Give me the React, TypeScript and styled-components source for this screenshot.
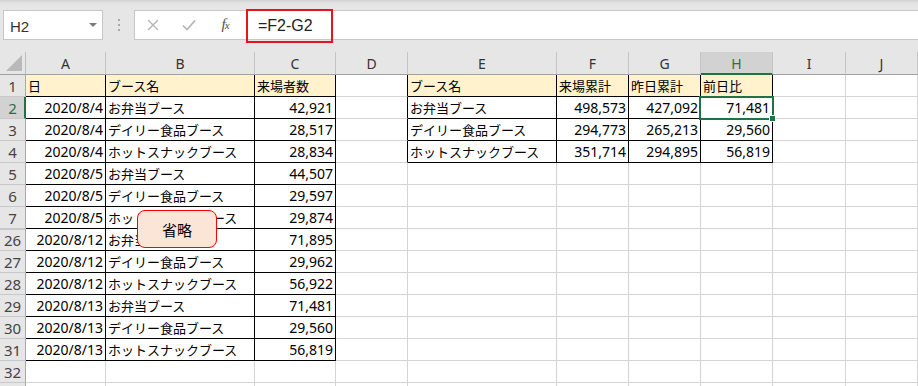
import React from "react";
import styled, { createGlobalStyle } from "styled-components";

const GlobalStyle = createGlobalStyle`
  html, body { margin: 0; padding: 0; background: #ffffff; }
  body { font-family: "Noto Sans CJK JP", "Noto Sans", sans-serif; overflow: hidden; }
`;

const COLS = [26, 80, 149, 81, 72, 149, 72, 72, 72, 73, 72];
const LETTERS = ["A", "B", "C", "D", "E", "F", "G", "H", "I", "J"];

const GRID = "#d4d4d4";
const BLACK = "#000000";
const GREEN = "#217346";

const Page = styled.div`
  position: relative;
  width: 918px;
  height: 386px;
  overflow: hidden;
  background: #ffffff;
`;

const Toolbar = styled.div`
  height: 52px;
  box-sizing: border-box;
  padding-top: 10px;
  display: flex;
  align-items: flex-start;
  background: linear-gradient(#d2d2d2 0px, #e2e2e2 3px, #e6e6e6 6px);
`;

const NameBox = styled.div`
  margin-left: 3px;
  width: 100px;
  height: 30px;
  box-sizing: border-box;
  background: #ffffff;
  border: 1px solid #c6c6c6;
  display: flex;
  align-items: center;
  justify-content: space-between;
  padding: 2px 5px 0 6px;
  font-family: "Liberation Sans", Arial, sans-serif;
  font-size: 15px;
  color: #333333;
`;

const Caret = styled.span`
  width: 0;
  height: 0;
  border-left: 4px solid transparent;
  border-right: 4px solid transparent;
  border-top: 4px solid #7a7a7a;
  margin-top: -3px;
`;

const Grip = styled.div`
  width: 31px;
  height: 30px;
  display: flex;
  flex-direction: column;
  align-items: center;
  justify-content: center;
  gap: 3px;
`;

const GripDot = styled.span`
  width: 2px;
  height: 2px;
  background: #a8a8a8;
`;

const ButtonBox = styled.div`
  width: 109px;
  height: 30px;
  box-sizing: border-box;
  background: #ffffff;
  border: 1px solid #c6c6c6;
  border-right: none;
  display: flex;
  align-items: center;
`;

const IconSlot = styled.span<{ $dark?: boolean }>`
  width: 37px;
  height: 28px;
  display: flex;
  align-items: center;
  justify-content: center;
  color: ${(p) => (p.$dark ? "#555555" : "#b4b4b4")};
`;

const FxText = styled.span`
  font-family: "Liberation Serif", "Times New Roman", serif;
  font-style: italic;
  font-size: 15px;
  color: #505050;
  letter-spacing: -1px;
  margin-top: -2px;
`;

const FxSub = styled.span`
  font-size: 11px;
`;

const FormulaArea = styled.div`
  flex: 1;
  height: 30px;
  box-sizing: border-box;
  background: #ffffff;
  border-top: 1px solid #c6c6c6;
  border-bottom: 1px solid #c6c6c6;
  display: flex;
  align-items: flex-start;
`;

const FormulaBox = styled.div`
  margin: -2px 0 0 3px;
  width: 87px;
  height: 34px;
  box-sizing: border-box;
  border: 2px solid #e8141a;
  display: flex;
  align-items: center;
  padding: 0 0 0 10px;
  font-family: "Liberation Sans", Arial, sans-serif;
  font-size: 16px;
  color: #222222;
`;

const Sheet = styled.div`
  display: grid;
  grid-template-columns: ${COLS.map((c) => `${c}px`).join(" ")};
  grid-template-rows: 23px;
  grid-auto-rows: 22px;
`;

const Corner = styled.div`
  position: relative;
  box-sizing: border-box;
  background: #e6e6e6;
  border-right: 1px solid #bdbdbd;
  border-bottom: 1px solid #a0a0a0;
`;

const CornerMark = styled.svg`
  position: absolute;
  right: 3px;
  bottom: 3px;
`;

const ColHead = styled.div<{ $sel?: boolean }>`
  box-sizing: border-box;
  background: ${(p) => (p.$sel ? "#d2d2d2" : "#e6e6e6")};
  border-right: 1px solid #c4c4c4;
  border-bottom: ${(p) => (p.$sel ? `2px solid ${GREEN}` : "1px solid #a0a0a0")};
  display: flex;
  align-items: center;
  justify-content: center;
  padding-top: 1px;
  font-family: "Noto Sans", sans-serif;
  font-size: 14px;
  color: ${(p) => (p.$sel ? GREEN : "#333333")};
`;

const RowHead = styled.div<{ $sel?: boolean; $gap?: boolean }>`
  box-sizing: border-box;
  background: ${(p) => (p.$sel ? "#d2d2d2" : "#e6e6e6")};
  border-right: ${(p) => (p.$sel ? `2px solid ${GREEN}` : "1px solid #a8a8a8")};
  border-bottom: 1px solid #c8c8c8;
  box-shadow: ${(p) => (p.$gap ? "inset 0 1px 0 #c8c8c8" : "none")};
  display: flex;
  align-items: flex-end;
  justify-content: center;
  padding-bottom: 1px;
  padding-left: ${(p) => (p.$sel ? "1px" : "0")};
  font-family: "Noto Sans", sans-serif;
  font-size: 15px;
  line-height: 18px;
  color: ${(p) => (p.$sel ? GREEN : "#444444")};
`;

const Cell = styled.div<{ $r: string; $b: string; $bg?: string; $right?: boolean; $jp?: boolean }>`
  position: relative;
  box-sizing: border-box;
  border-right: 1px solid ${(p) => p.$r};
  border-bottom: 1px solid ${(p) => p.$b};
  background: ${(p) => p.$bg ?? "#ffffff"};
  display: flex;
  align-items: flex-end;
  justify-content: ${(p) => (p.$right ? "flex-end" : "flex-start")};
  padding: 0 2px 1px 2px;
  font-family: ${(p) => (p.$jp ? `"Noto Sans CJK JP", sans-serif` : `"Noto Sans", "Noto Sans CJK JP", sans-serif`)};
  font-size: ${(p) => (p.$jp ? "13px" : "14px")};
  line-height: 18px;
  color: #000000;
  white-space: nowrap;
`;

const Selection = styled.div`
  position: absolute;
  top: -1px;
  left: -2px;
  right: -2px;
  bottom: -2px;
  border: 2px solid ${GREEN};
  z-index: 2;
  pointer-events: none;
`;

const FillHandle = styled.div`
  position: absolute;
  right: -4px;
  bottom: -4px;
  width: 5px;
  height: 5px;
  background: ${GREEN};
  border: 1px solid #ffffff;
`;

const Callout = styled.div`
  position: absolute;
  left: 137px;
  top: 210px;
  width: 80px;
  height: 38px;
  box-sizing: border-box;
  background: #fbe5d6;
  border: 1px solid #ff0000;
  border-radius: 8px;
  display: flex;
  align-items: center;
  justify-content: center;
  font-size: 15px;
  color: #000000;
  z-index: 3;
`;

type RowData = { n: number; label: string; cells: string[] };

const E = ["", "", "", "", "", "", ""];

const ROWS: RowData[] = [
  { n: 1, label: "1", cells: ["日", "ブース名", "来場者数", "", "ブース名", "来場累計", "昨日累計", "前日比", "", ""] },
  { n: 2, label: "2", cells: ["2020/8/4", "お弁当ブース", "42,921", "", "お弁当ブース", "498,573", "427,092", "71,481", "", ""] },
  { n: 3, label: "3", cells: ["2020/8/4", "デイリー食品ブース", "28,517", "", "デイリー食品ブース", "294,773", "265,213", "29,560", "", ""] },
  { n: 4, label: "4", cells: ["2020/8/4", "ホットスナックブース", "28,834", "", "ホットスナックブース", "351,714", "294,895", "56,819", "", ""] },
  { n: 5, label: "5", cells: ["2020/8/5", "お弁当ブース", "44,507", ...E] },
  { n: 6, label: "6", cells: ["2020/8/5", "デイリー食品ブース", "29,597", ...E] },
  { n: 7, label: "7", cells: ["2020/8/5", "ホットスナックブース", "29,874", ...E] },
  { n: 26, label: "26", cells: ["2020/8/12", "お弁当ブース", "71,895", ...E] },
  { n: 27, label: "27", cells: ["2020/8/12", "デイリー食品ブース", "29,962", ...E] },
  { n: 28, label: "28", cells: ["2020/8/12", "ホットスナックブース", "56,922", ...E] },
  { n: 29, label: "29", cells: ["2020/8/13", "お弁当ブース", "71,481", ...E] },
  { n: 30, label: "30", cells: ["2020/8/13", "デイリー食品ブース", "29,560", ...E] },
  { n: 31, label: "31", cells: ["2020/8/13", "ホットスナックブース", "56,819", ...E] },
  { n: 32, label: "32", cells: ["", "", "", ...E] },
  { n: 33, label: "", cells: ["", "", "", ...E] },
];

const inLeftTable = (n: number, c: number) => n >= 1 && n <= 31 && c <= 2;
const inRightTable = (n: number, c: number) => n >= 1 && n <= 4 && c >= 4 && c <= 7;

export default function App() {
  return (
    <Page>
      <GlobalStyle />
      <Toolbar>
        <NameBox>
          <span>H2</span>
          <Caret />
        </NameBox>
        <Grip>
          <GripDot />
          <GripDot />
          <GripDot />
        </Grip>
        <ButtonBox>
          <IconSlot>
            <svg width="12" height="12" viewBox="0 0 12 12">
              <path d="M1 1 L11 11 M11 1 L1 11" stroke="currentColor" strokeWidth="1.4" fill="none" />
            </svg>
          </IconSlot>
          <IconSlot>
            <svg width="14" height="12" viewBox="0 0 14 12">
              <path d="M1 6.5 L5 10.5 L13 1.5" stroke="currentColor" strokeWidth="1.6" fill="none" />
            </svg>
          </IconSlot>
          <IconSlot $dark>
            <FxText>
              f<FxSub>x</FxSub>
            </FxText>
          </IconSlot>
        </ButtonBox>
        <FormulaArea>
          <FormulaBox>=F2-G2</FormulaBox>
        </FormulaArea>
      </Toolbar>
      <Sheet>
        <Corner>
          <CornerMark width="16" height="16" viewBox="0 0 16 16">
            <path d="M16 0 L16 16 L0 16 Z" fill="#b9b9b9" />
          </CornerMark>
        </Corner>
        {LETTERS.map((l) => (
          <ColHead key={l} $sel={l === "H"}>
            {l}
          </ColHead>
        ))}
        {ROWS.map((row) => (
          <React.Fragment key={row.n}>
            <RowHead $sel={row.n === 2} $gap={row.n === 26}>
              {row.label}
            </RowHead>
            {row.cells.map((text, c) => {
              const inTable = inLeftTable(row.n, c) || inRightTable(row.n, c);
              const rightBlack = inTable || inRightTable(row.n, c + 1);
              const isHeader = row.n === 1 && inTable;
              const isRight = row.n > 1 && (c === 0 || c === 2 || (c >= 5 && c <= 7));
              const selected = row.n === 2 && c === 7;
              return (
                <Cell
                  key={c}
                  $r={rightBlack ? BLACK : GRID}
                  $b={inTable ? BLACK : GRID}
                  $bg={isHeader ? "#fff2cc" : "#ffffff"}
                  $right={isRight}
                  $jp={!isRight}
                >
                  {text}
                  {selected && (
                    <Selection>
                      <FillHandle />
                    </Selection>
                  )}
                </Cell>
              );
            })}
          </React.Fragment>
        ))}
      </Sheet>
      <Callout>省略</Callout>
    </Page>
  );
}
